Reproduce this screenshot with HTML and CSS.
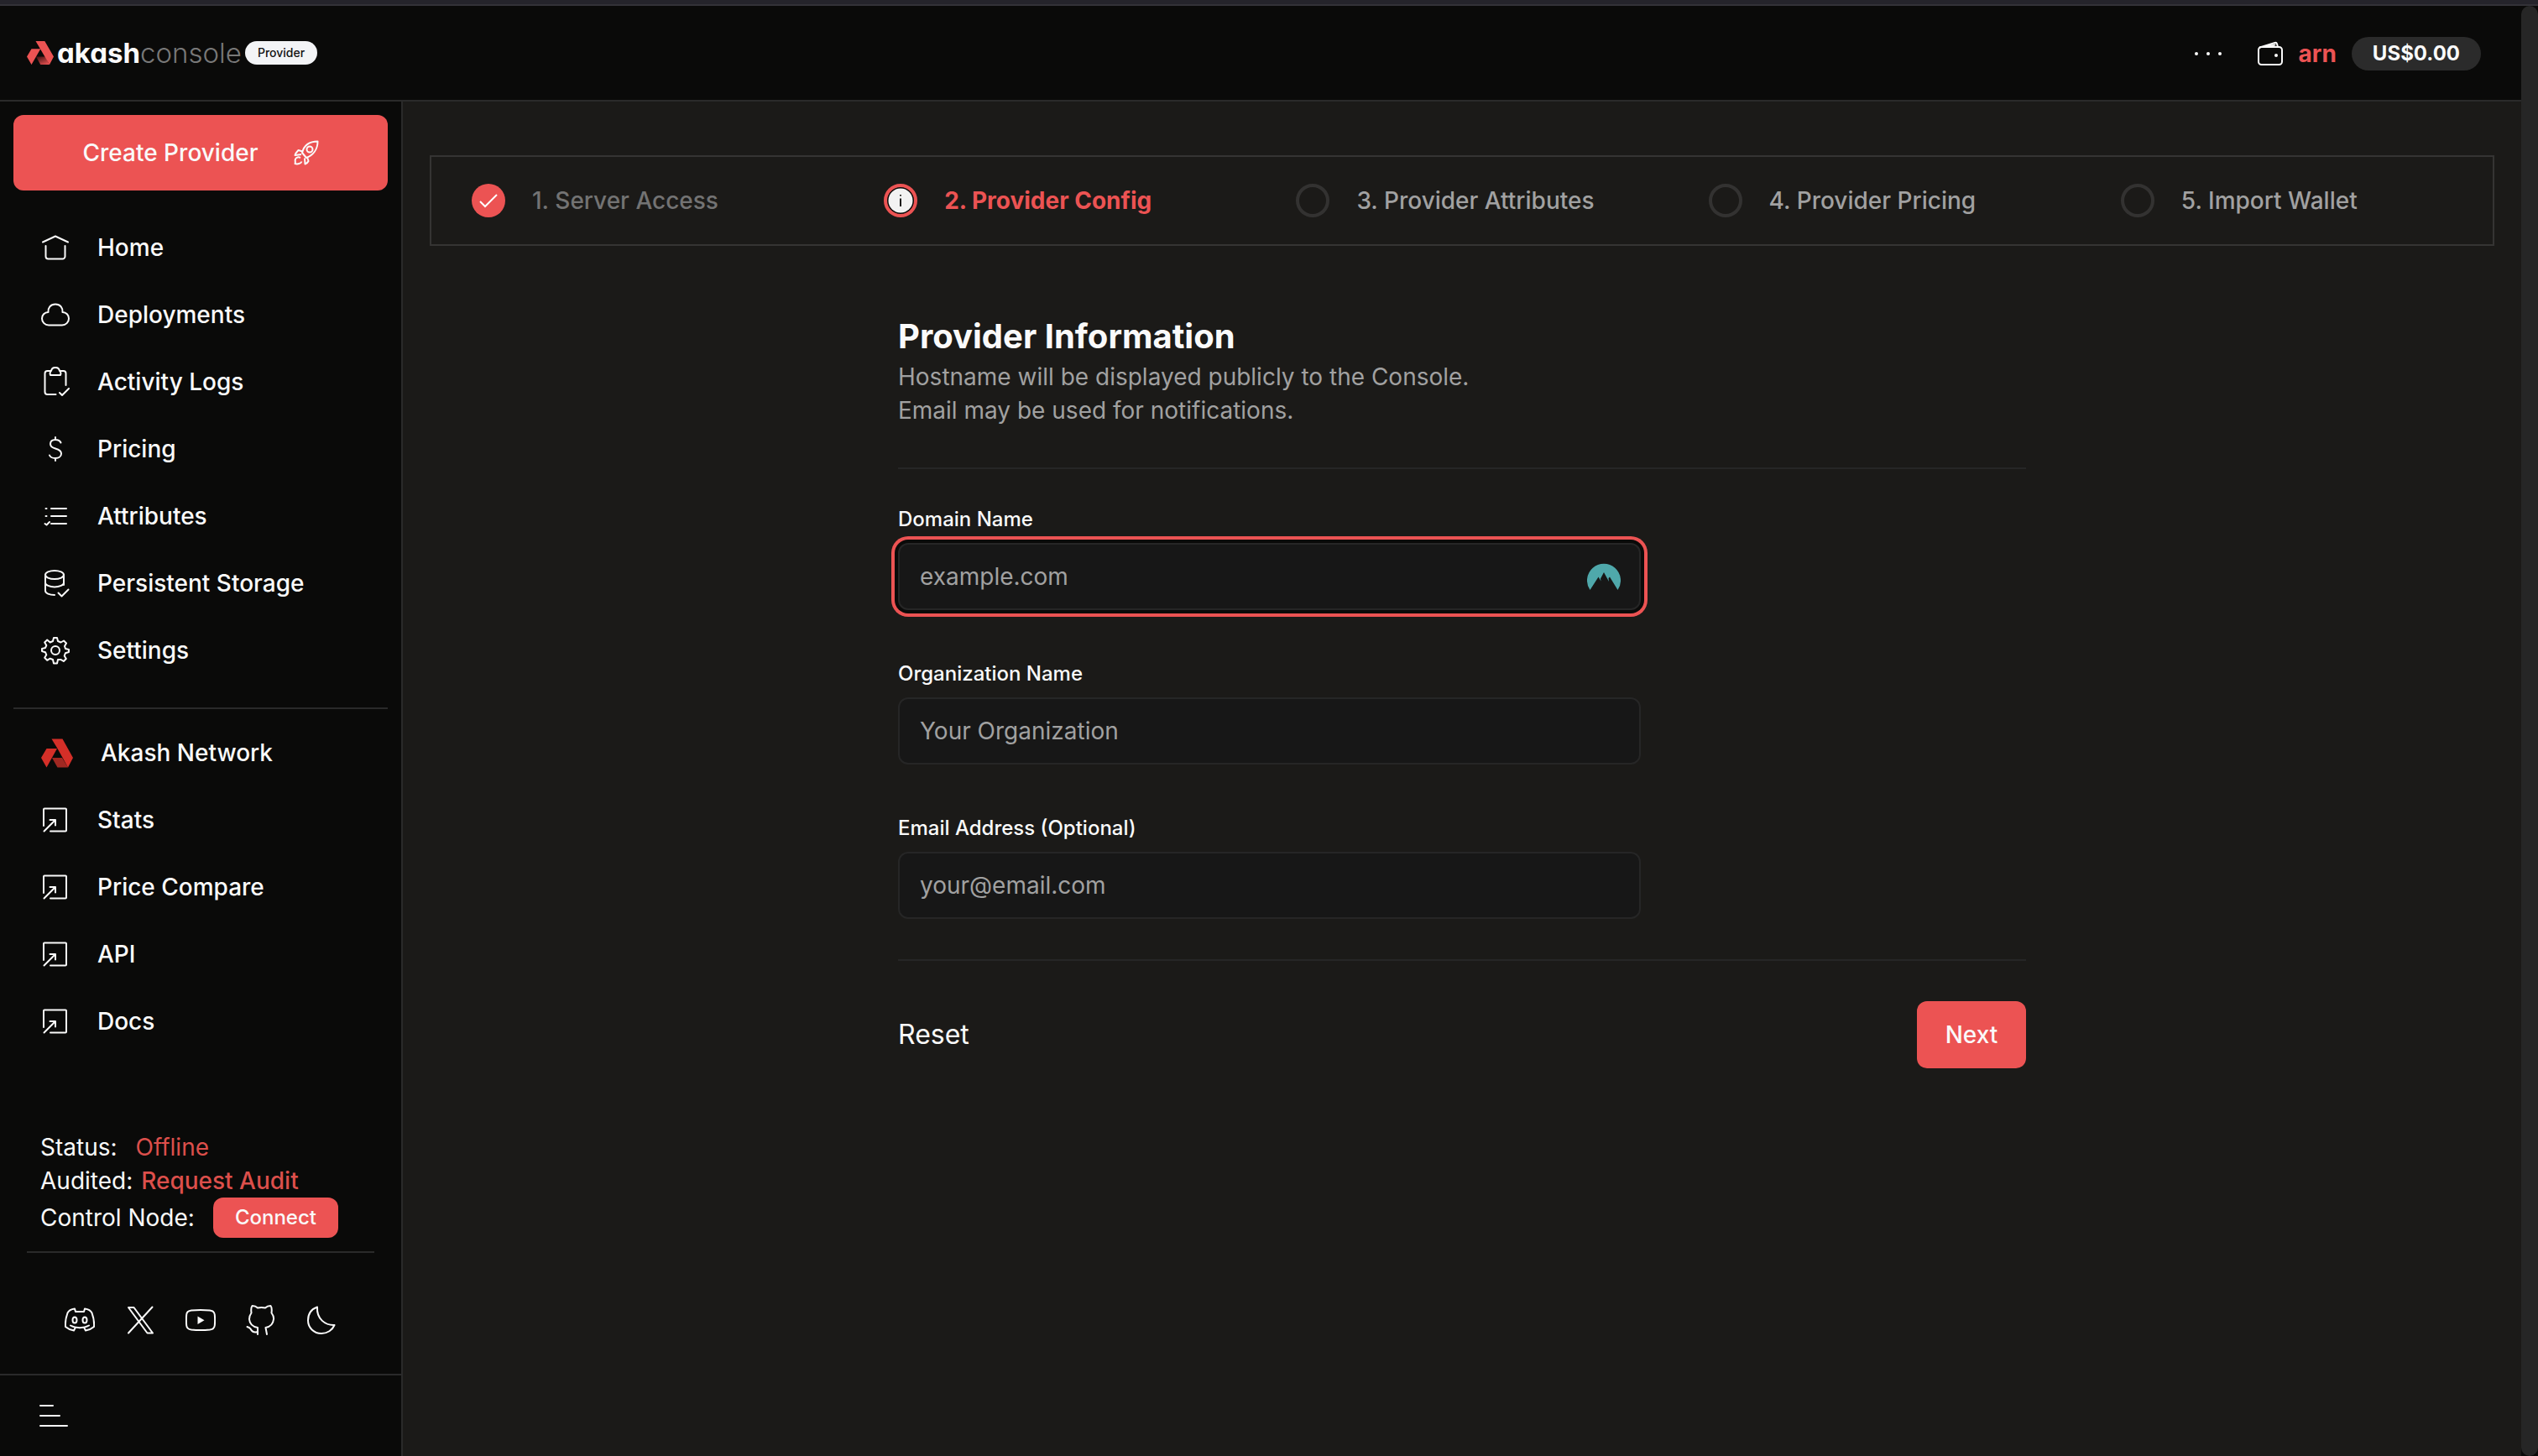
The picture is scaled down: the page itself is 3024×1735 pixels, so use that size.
FILE: index.html
```html
<!DOCTYPE html>
<html lang="en">
<head>
<meta charset="utf-8">
<title>Akash Console - Provider</title>
<meta name="viewport" content="width=device-width, initial-scale=1">
<link rel="stylesheet" href="styles.css">
</head>
<body>
<svg class="defs" aria-hidden="true">
  <defs>
    <symbol id="launch" viewBox="0 0 36 36"><path d="M4 25V5.500a1 1 0 0 1 1-1h25a1 1 0 0 1 1 1v25a1 1 0 0 1-1 1H12M4.500 31.500 18 18M11.500 18H18v6.500"/></symbol>
  </defs>
</svg>
<div class="window">
  <div class="page">
    <header class="topbar">
      <a class="brand" href="#">
        <svg class="brand-mark" viewBox="0 0 32 28" aria-hidden="true">
          <defs><linearGradient id="fold" x1="0.900" y1="1" x2="0.200" y2="0"><stop offset="0" stop-color="#ec5353"/><stop offset="1" stop-color="#4a1514"/></linearGradient></defs>
          <path fill="url(#fold)" d="M11 18.500h11l5 9.500H16.200z"/>
          <path fill="#ec5353" d="M10.500 0h10.800L32 18.500 27 28z M5.500 9.300h10.800L5.500 28 0 18.500z"/>
        </svg>
        <span class="brand-name">akash</span><span class="brand-sub">console</span>
        <span class="brand-tag">Provider</span>
      </a>
      <div class="account">
        <button class="icon-button" type="button" aria-label="More"><svg class="dots" viewBox="0 0 36 36"><circle cx="4" cy="18" r="2"/><circle cx="18" cy="18" r="2"/><circle cx="32" cy="18" r="2"/></svg></button>
        <a class="wallet" href="#">
          <svg class="icon" viewBox="0 0 36 36" aria-hidden="true"><rect x="4" y="10" width="28" height="21" rx="3.500"/><path d="M5.500 10.500 23.500 5a2 2 0 0 1 2.500 1.300L27 10M23.500 7.500 13 10"/><circle class="dot" cx="25" cy="20" r="2"/></svg>
          <span>arn</span>
        </a>
        <span class="balance">US$0.00</span>
      </div>
    </header>
    <div class="body">
      <aside class="sidebar">
        <a class="create" href="#">Create Provider
          <svg class="rocket" viewBox="0 0 30 30" aria-hidden="true"><path d="M10 15C12 7 18 1.500 28.500 1.500 28.500 11 23 18 15 21zM10.500 13.500 5.500 12C3.500 14 2 16 1.500 18L9 17M16 20l1.500 5c-1 2-2.500 3-4 3.500L13 21.500M8 21c-2-1-5-1-6 1.500-1 2 .5 4-.5 5.500 3 1 7 0 8-2.500"/><circle cx="19" cy="11" r="3.500"/></svg>
        </a>
        <nav class="nav" aria-label="Provider">
          <a href="#"><svg class="icon" viewBox="0 0 36 36"><path d="M3 11.500 18 4.500l15 7M6.500 16v12.500a3 3 0 0 0 3 3h17a3 3 0 0 0 3-3V16"/></svg>Home</a>
          <a href="#"><svg class="icon" viewBox="0 0 36 36"><path d="M10 30.500a8 8 0 0 1-8-8c0-4 3-7.500 7.500-7.500C9 10 12 5.500 18 5.500S27 10 26.500 15c4.500 0 7.500 3.500 7.500 7.500a8 8 0 0 1-8 8z"/></svg>Deployments</a>
          <a href="#"><svg class="icon" viewBox="0 0 36 36"><path d="M18.500 33H8.500a3 3 0 0 1-3-3V8a3 3 0 0 1 3-3H13c1-5.500 9-5.500 10 0h4.500a3 3 0 0 1 3 3v14M13 5c-1.500 1-1.500 3.500-1 5h12c.5-1.500.5-4-1-5M23 31l3 3 8-8"/></svg>Activity Logs</a>
          <a href="#"><svg class="icon" viewBox="0 0 36 36"><path d="M18 4v3M18 29v3M24.500 10.500c-1-2.300-3.500-3.500-6.500-3.500-3.500 0-6 1.500-6 5 0 3 2.500 4.500 6 5.500s7 2.500 7 6c0 3.500-3 5.500-7 5.500-3.500 0-6-1-7-3.500"/></svg>Pricing</a>
          <a href="#"><svg class="icon" viewBox="0 0 36 36"><path d="M13 9h18M13 18h18M13 27h18M6.500 9h1M6.500 18h1M5.500 27l2 1.500 3.500-3.500"/></svg>Attributes</a>
          <a href="#"><svg class="icon" viewBox="0 0 36 36"><ellipse cx="17" cy="8" rx="11" ry="5"/><path d="M6 8v19c0 3 5 5 11 5M28 8v12M6 17.500c0 2.500 5 5 11 5s11-2.500 11-5M21.500 29.500l4 4 8-8"/></svg>Persistent Storage</a>
          <a href="#"><svg class="icon" viewBox="0 0 36 36"><path d="M16 3h4l1 4 3.500 1.500L28 6.500l3 3-2 3.500 1 3 4 1v3l-4 1.200-1.300 3.300 2.100 3.500-3 3-3.500-2.100L21 29l-1 4.500h-4L15 29l-3.300-1.300-3.500 2.100-3-3 2.100-3.500L6 20.200 2 19v-3l4-1 1.300-3-2.100-3.500 3-3L11.700 8.500 15 7z"/><circle cx="18" cy="18" r="5"/></svg>Settings</a>
        </nav>
        <nav class="nav nav-network" aria-label="Akash Network">
          <a href="#"><svg class="network-mark" viewBox="0 0 40 36"><path fill="#a02822" d="M14 24h12l7 11.500H20.500z"/><path fill="#d42f28" d="M13.500 1.500h13L39 24l-6 11.500L20.500 13z M7.500 13h12.500L7.500 35.500 1 24z"/></svg>Akash Network</a>
          <a href="#"><svg class="icon"><use href="#launch"/></svg>Stats</a>
          <a href="#"><svg class="icon"><use href="#launch"/></svg>Price Compare</a>
          <a href="#"><svg class="icon"><use href="#launch"/></svg>API</a>
          <a href="#"><svg class="icon"><use href="#launch"/></svg>Docs</a>
        </nav>
        <div class="status">
          <div class="status-row status-wide">Status: <span class="offline">Offline</span></div>
          <div class="status-row">Audited: <a class="audit" href="#">Request Audit</a></div>
          <div class="status-row status-wide">Control Node: <button class="connect" type="button">Connect</button></div>
        </div>
        <div class="social">
          <a href="#" aria-label="Discord"><svg class="icon" viewBox="0 0 36 36"><path d="M13 8l-1-3.500C8 5 5 6.500 3.500 9.500 1.500 15 .5 20 1 26c3 2.500 6 4 10 4.500l1.500-3M23 8l1-3.500c4 .5 7 2 8.500 5 2 5.500 3 10.500 2.500 16.500-3 2.500-6 4-10 4.500l-1.500-3M13 8h10M7 24.500c6 3.500 16 3.500 22 0"/><ellipse cx="12" cy="18" rx="2.500" ry="3.500"/><ellipse cx="24" cy="18" rx="2.500" ry="3.500"/></svg></a>
          <a href="#" aria-label="X"><svg class="icon" viewBox="0 0 36 36"><path d="M4 3h6.500L33 33.500h-6.500zM32.500 2.500 4 33.500"/></svg></a>
          <a href="#" aria-label="YouTube"><svg class="icon" viewBox="0 0 36 36"><path d="M7 6.500c7-.7 15-.7 22 0 4 .5 5.500 2 5.800 5 .4 4.500.4 9 0 13-.3 3-1.800 4.500-5.800 5-7 .7-15 .7-22 0-4-.5-5.500-2-5.800-5-.4-4-.4-8.500 0-13 .3-3 1.800-4.500 5.800-5z"/><path class="dot" d="M14.500 13.500v9.500l8-4.700z"/></svg></a>
          <a href="#" aria-label="GitHub"><svg class="icon" viewBox="0 0 36 36"><path d="M14 35v-8C8 26 4.500 22.500 4 17c0-3 1-5.500 2.500-7.500C6 6 6 3 7.500 1c3 0 5 1 6.500 2.500 3-.7 6-.7 9 0C24.500 2 27 1 29.500 1c1.500 2 1.500 5 1 8.500C32 11.500 33.500 14 33 17c-.5 5.500-4 9-9.500 10l1.500 8M14 32c-5 1.500-7-.5-8.500-3.500C4.500 27 3 26.500 1.500 26"/></svg></a>
          <button class="icon-button" type="button" aria-label="Dark mode"><svg class="icon" viewBox="0 0 36 36"><path d="M13 2.500C6 5 2 11 2 18.500 2 27 9 34 18 34c7 0 13-4 15.500-10C23 24.500 12 17 13 2.500z"/></svg></button>
        </div>
        <div class="sidebar-foot">
          <button class="icon-button" type="button" aria-label="Collapse sidebar"><svg class="icon" viewBox="0 0 36 36"><path d="M2 6h15M2 18h23M2 30h32"/></svg></button>
        </div>
      </aside>
      <main class="main">
        <ol class="steps">
          <li class="step step-done"><svg class="step-icon" viewBox="0 0 40 40"><circle cx="20" cy="20" r="20" fill="#ec5353"/><path d="M10 21l6 6 14-14" fill="none" stroke="#fff" stroke-width="2"/></svg>1. Server Access</li>
          <li class="step step-current" aria-current="step"><svg class="step-icon" viewBox="0 0 40 40"><circle cx="20" cy="20" r="18" fill="#0a0a09" stroke="#ec5353" stroke-width="4"/><circle cx="20" cy="20" r="14.500" fill="#f2f2f2"/><path d="M20 17.500v9.500M20 13v1.500" stroke="#1b1a18" stroke-width="2"/></svg>2. Provider Config</li>
          <li class="step"><svg class="step-icon" viewBox="0 0 40 40"><circle cx="20" cy="20" r="18" fill="none" stroke="#333231" stroke-width="4"/></svg>3. Provider Attributes</li>
          <li class="step"><svg class="step-icon" viewBox="0 0 40 40"><circle cx="20" cy="20" r="18" fill="none" stroke="#333231" stroke-width="4"/></svg>4. Provider Pricing</li>
          <li class="step"><svg class="step-icon" viewBox="0 0 40 40"><circle cx="20" cy="20" r="18" fill="none" stroke="#333231" stroke-width="4"/></svg>5. Import Wallet</li>
        </ol>
        <form class="form">
          <h1>Provider Information</h1>
          <p class="lead">Hostname will be displayed publicly to the Console.<br>Email may be used for notifications.</p>
          <div class="fields">
            <div class="field">
              <label for="domain">Domain Name</label>
              <div class="input-wrap">
                <input class="focused" id="domain" type="text" placeholder="example.com">
                <svg class="vault" viewBox="0 0 40 32" aria-hidden="true"><path fill="#4fa8ab" d="M3.500 32A20 20 0 1 1 36.500 32L27 16.500l-1.500 1.500.5 4-6-11-4 7.500.5 3-3-5z"/></svg>
              </div>
            </div>
            <div class="field">
              <label for="org">Organization Name</label>
              <input id="org" type="text" placeholder="Your Organization">
            </div>
            <div class="field">
              <label for="email">Email Address (Optional)</label>
              <input id="email" type="email" placeholder="your@email.com">
            </div>
          </div>
          <div class="actions">
            <button class="reset" type="reset">Reset</button>
            <button class="next" type="button">Next</button>
          </div>
        </form>
      </main>
    </div>
  </div>
  <div class="scroll-track"><div class="scroll-thumb"></div></div>
</div>
</body>
</html>
```
FILE: styles.css
```css
:root {
  --accent: #ec5353;
  --ink: #0a0a09;
  --surface: #1b1a18;
  --line: #2a2a2a;
  --muted: #a1a1a1;
}

* { box-sizing: border-box; }

body {
  margin: 0;
  background: var(--surface);
  color: #fafafa;
  font: 400 28px/40px Inter, "Liberation Sans", sans-serif;
}

a { color: inherit; text-decoration: none; }
button { border: 0; padding: 0; background: none; color: inherit; font: inherit; cursor: pointer; }
svg { display: block; flex: none; }
.defs { position: absolute; width: 0; height: 0; }

.icon {
  width: 36px;
  height: 36px;
  fill: none;
  stroke: currentColor;
  stroke-width: 2;
  stroke-linecap: round;
  stroke-linejoin: round;
}
.icon .dot { fill: currentColor; stroke: none; }
.icon-button { display: block; }

.window {
  display: flex;
  min-height: 100vh;
  border-top: 5px solid #25242b;
}
.page {
  flex: 1;
  display: flex;
  flex-direction: column;
  border-top: 2px solid #333238;
}
.scroll-track {
  width: 20px;
  display: flex;
  background: var(--ink);
  border-top: 2px solid #333238;
}
.scroll-thumb { flex: 1; border-radius: 10px; background: #262626; }

/* Header */
.topbar {
  display: flex;
  justify-content: space-between;
  align-items: center;
  height: 114px;
  padding: 0 48px 0 32px;
  background: var(--ink);
  border-bottom: 2px solid var(--line);
}
.brand { display: flex; align-items: center; }
.brand-mark { width: 32px; height: 28px; margin-right: 4px; }
.brand-name, .brand-sub { font-size: 33px; font-feature-settings: "cv11"; }
.brand-name { font-weight: 700; }
.brand-sub { font-weight: 300; color: #787878; }
.brand-tag {
  margin-left: 4px;
  padding: 0 15px;
  border-radius: 14px;
  background: #f3f4f6;
  color: #111;
  font-size: 14px;
  font-weight: 500;
  line-height: 28px;
}
.account { display: flex; align-items: center; padding-top: 2px; }
.dots { width: 36px; height: 36px; fill: currentColor; }
.wallet {
  display: flex;
  align-items: center;
  gap: 16px;
  margin: 0 18px 0 38px;
  font-weight: 700;
}
.wallet span { color: var(--accent); }
.balance {
  padding: 0 25px;
  border-radius: 20px;
  background: #2b2b2b;
  font-size: 24px;
  font-weight: 700;
}

.body { flex: 1; display: flex; }

/* Sidebar */
.sidebar {
  flex: none;
  width: 480px;
  display: flex;
  flex-direction: column;
  background: var(--ink);
  border-right: 2px solid var(--line);
}
.create {
  display: flex;
  justify-content: center;
  align-items: center;
  gap: 42px;
  height: 90px;
  margin: 16px 16px 28px;
  border-radius: 12px;
  background: var(--accent);
  font-weight: 500;
}
.rocket {
  width: 30px;
  height: 30px;
  fill: none;
  stroke: currentColor;
  stroke-width: 2;
  stroke-linejoin: round;
}
.nav { margin: 0 16px; padding-left: 32px; }
.nav a {
  display: flex;
  align-items: center;
  gap: 32px;
  height: 80px;
  font-weight: 500;
}
.nav-network {
  margin-top: 28px;
  padding-top: 12px;
  border-top: 2px solid var(--line);
}
.network-mark { width: 40px; height: 36px; }
.status {
  margin: auto 32px 0;
  padding: 0 16px 16px;
  border-bottom: 2px solid var(--line);
}
.status-row { display: flex; align-items: center; gap: 10px; }
.status-wide { gap: 22px; }
.offline, .audit { color: #dc4f4b; }
.audit { font-weight: 500; }
.connect {
  height: 48px;
  padding: 0 26px;
  border-radius: 12px;
  background: var(--accent);
  font-size: 24px;
  font-weight: 500;
}
.social {
  display: flex;
  justify-content: center;
  gap: 36px;
  padding: 62px 0 46px;
}
.sidebar-foot {
  height: 98px;
  padding: 30px 46px;
  border-top: 2px solid var(--line);
}

/* Main column */
.main { flex: 1; min-width: 0; padding: 64px 32px; }
.steps {
  display: grid;
  grid-template-columns: repeat(5, 1fr);
  margin: 0 0 80px;
  padding: 0;
  border: 2px solid #353433;
  list-style: none;
}
.step {
  display: flex;
  align-items: center;
  gap: 32px;
  height: 104px;
  padding-left: 48px;
  color: var(--muted);
  font-weight: 500;
}
.step-done { color: #737373; }
.step-current { color: var(--accent); font-weight: 700; }
.step-icon { width: 40px; height: 40px; }

.form { max-width: 1344px; margin: 0 auto; }
h1 { margin: 0; font-size: 40px; line-height: 56px; font-weight: 700; }
.lead { margin: 0 0 48px; color: var(--muted); }
.fields {
  display: grid;
  gap: 64px;
  padding: 48px 0;
  border: solid #262626;
  border-width: 2px 0;
}
.field { display: grid; gap: 16px; width: 885px; max-width: 100%; }
label { font-size: 24px; line-height: 24px; font-weight: 500; }
input {
  width: 100%;
  height: 80px;
  padding: 0 24px;
  border: 2px solid #262626;
  border-radius: 12px;
  background: #171717;
  color: inherit;
  font: inherit;
}
input::placeholder { color: #a1a1a1; opacity: 1; }
.focused { box-shadow: 0 0 0 4px var(--ink), 0 0 0 8px var(--accent); outline: 0; }
.input-wrap { position: relative; }
.vault { position: absolute; top: 24px; right: 24px; width: 40px; height: 32px; }
.actions {
  display: flex;
  justify-content: space-between;
  align-items: center;
  padding-top: 48px;
}
.reset { font-size: 32px; }
.next {
  min-width: 130px;
  height: 80px;
  padding: 0 32px;
  border-radius: 12px;
  background: var(--accent);
  font-weight: 500;
}
```
